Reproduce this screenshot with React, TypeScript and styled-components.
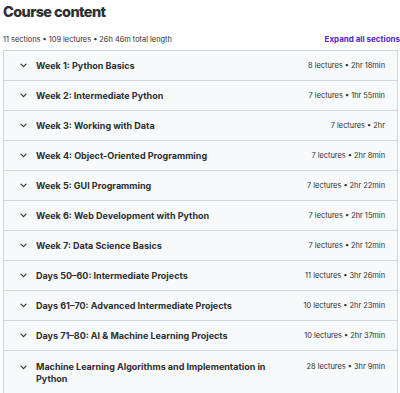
import React from "react";
import styled, { createGlobalStyle } from "styled-components";

const Global = createGlobalStyle`
  html, body { margin: 0; padding: 0; background: #ffffff; }
  body { font-family: "Inter", "Noto Sans", sans-serif; color: #2d2f31; overflow: hidden; }
`;

const Page = styled.div`
  width: 400px;
  padding: 0 2px 0 3px;
  box-sizing: border-box;
`;

const Title = styled.h2`
  margin: 0;
  padding-top: 1px;
  font-family: "Inter", sans-serif;
  font-size: 14.5px;
  line-height: 22px;
  font-weight: 800;
  letter-spacing: -0.6px;
  color: #2d2f31;
`;

const MetaBar = styled.div`
  display: flex;
  align-items: center;
  justify-content: space-between;
  height: 22px;
  margin-top: 5px;
  margin-right: -2px;
`;

const Meta = styled.span`
  font-size: 7.4px;
  color: #2d2f31;
`;

const Expand = styled.button`
  border: 0;
  background: none;
  padding: 0;
  font-family: "Inter", sans-serif;
  font-size: 8px;
  font-weight: 700;
  color: #5624d0;
  cursor: pointer;
`;

const Panel = styled.div`
  border: 1px solid #d1d7dc;
  border-bottom: 0;
`;

const Row = styled.div<{ $tall?: boolean }>`
  display: flex;
  align-items: ${(p) => (p.$tall ? "flex-start" : "center")};
  min-height: 30px;
  padding: ${(p) => (p.$tall ? "10px 12px 9px 14px" : "0 12px 0 14px")};
  box-sizing: border-box;
  background: #f7f9fa;
  border-bottom: 1px solid #d1d7dc;
`;

const Chevron = styled.span`
  display: flex;
  align-items: center;
  justify-content: center;
  width: 10px;
  height: 12px;
  margin-right: 8px;
  color: #2d2f31;
`;

const SectionTitle = styled.span`
  flex: 1;
  font-size: 9px;
  line-height: 12px;
  font-weight: 700;
  color: #2d2f31;
`;

const Summary = styled.span`
  margin-left: 24px;
  font-size: 7.4px;
  line-height: 12px;
  color: #2d2f31;
  white-space: nowrap;
`;

const sections: [string, string][] = [
  ["Week 1: Python Basics", "8 lectures • 2hr 18min"],
  ["Week 2: Intermediate Python", "7 lectures • 1hr 55min"],
  ["Week 3: Working with Data", "7 lectures • 2hr"],
  ["Week 4: Object-Oriented Programming", "7 lectures • 2hr 8min"],
  ["Week 5: GUI Programming", "7 lectures • 2hr 22min"],
  ["Week 6: Web Development with Python", "7 lectures • 2hr 15min"],
  ["Week 7: Data Science Basics", "7 lectures • 2hr 12min"],
  ["Days 50–60: Intermediate Projects", "11 lectures • 3hr 26min"],
  ["Days 61–70: Advanced Intermediate Projects", "10 lectures • 2hr 23min"],
  ["Days 71–80: AI & Machine Learning Projects", "10 lectures • 2hr 37min"],
  ["Machine Learning Algorithms and Implementation in Python", "28 lectures • 3hr 9min"],
];

const ChevronIcon = () => (
  <svg width="7" height="5" viewBox="0 0 7 5" fill="none">
    <path d="M1 1.2 L3.5 3.6 L6 1.2" stroke="currentColor" strokeWidth="1.1" strokeLinecap="round" strokeLinejoin="round" />
  </svg>
);

export default function App() {
  return (
    <Page>
      <Global />
      <Title>Course content</Title>
      <MetaBar>
        <Meta>11 sections • 109 lectures • 26h 46m total length</Meta>
        <Expand>Expand all sections</Expand>
      </MetaBar>
      <Panel>
        {sections.map(([t, s], i) => (
          <Row key={i} $tall={i === sections.length - 1}>
            <Chevron>
              <ChevronIcon />
            </Chevron>
            <SectionTitle>{t}</SectionTitle>
            <Summary>{s}</Summary>
          </Row>
        ))}
      </Panel>
    </Page>
  );
}
